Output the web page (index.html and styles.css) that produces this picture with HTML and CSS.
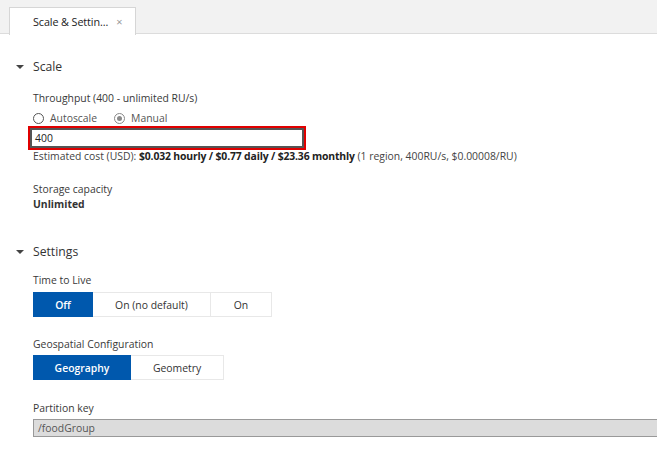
FILE: index.html
```html
<!DOCTYPE html>
<html>
<head>
<meta charset="utf-8">
<link rel="stylesheet" href="styles.css">
</head>
<body>
<div class="tabbar">
  <div class="tab"><span class="tab-title">Scale &amp; Settin...</span><span class="tab-close">×</span></div>
</div>
<div class="content">
  <div class="section-head scale-head"><span class="caret"></span><span class="section-title">Scale</span></div>
  <div class="label throughput">Throughput (400 - unlimited RU/s)</div>
  <div class="radios">
    <span class="radio"></span><span class="radio-label">Autoscale</span>
    <span class="radio checked"></span><span class="radio-label">Manual</span>
  </div>
  <div class="input-wrap"><div class="input">400</div></div>
  <div class="cost">Estimated cost (USD): <b>$0.032 hourly / $0.77 daily / $23.36 monthly</b> (1 region, 400RU/s, $0.00008/RU)</div>
  <div class="label storage">Storage capacity</div>
  <div class="value">Unlimited</div>
  <div class="section-head settings-head"><span class="caret"></span><span class="section-title">Settings</span></div>
  <div class="label ttl-label">Time to Live</div>
  <div class="toggle">
    <span class="opt sel w-off">Off</span><span class="opt w-nodef">On (no default)</span><span class="opt w-on">On</span>
  </div>
  <div class="label geo-label">Geospatial Configuration</div>
  <div class="toggle">
    <span class="opt sel w-geog">Geography</span><span class="opt w-geom">Geometry</span>
  </div>
  <div class="label pk-label">Partition key</div>
  <div class="pk">/foodGroup</div>
</div>
</body>
</html>
```
FILE: styles.css
```css
html, body {
  margin: 0;
  padding: 0;
  background: #fff;
  font-family: "Segoe UI", "Open Sans", "Noto Sans", sans-serif;
  color: #393939;
  overflow: hidden;
}
.tabbar {
  height: 34px;
  background: #f2f2f2;
  border-bottom: 1px solid #dcdcdc;
  box-sizing: border-box;
  padding-left: 9px;
  padding-top: 7px;
  display: flex;
}
.tab {
  width: 127px;
  height: 28px;
  background: #fff;
  border: 1px solid #d6d6d6;
  border-bottom: none;
  box-sizing: border-box;
  display: flex;
  align-items: center;
  padding-left: 23px;
  font-size: 10.8px;
  color: #222;
}
.tab-title { letter-spacing: -0.1px; }
.tab-close {
  margin-left: 8px;
  color: #999;
  font-size: 11px;
}
.content {
  padding-left: 33px;
  font-size: 10.4px;
}
.section-head {
  display: flex;
  align-items: center;
  height: 20px;
  margin-left: -17px;
}
.scale-head { margin-top: 22px; }
.settings-head { margin-top: 29px; }
.caret {
  width: 0;
  height: 0;
  border-left: 4px solid transparent;
  border-right: 4px solid transparent;
  border-top: 4px solid #444;
  margin-right: 9px;
  margin-top: 2px;
}
.section-title {
  font-size: 12.2px;
  color: #333;
}
.label {
  height: 16px;
  line-height: 16px;
}
.throughput { margin-top: 14px; }
.radios {
  display: flex;
  align-items: center;
  height: 16px;
  margin-top: 4px;
}
.radio {
  width: 11px;
  height: 11px;
  border: 1px solid #555;
  border-radius: 50%;
  box-sizing: border-box;
  margin-right: 6px;
  position: relative;
}
.radio.checked {
  border-color: #888;
  margin-left: 17px;
}
.radio.checked::after {
  content: "";
  position: absolute;
  left: 2px; top: 2px;
  width: 5px; height: 5px;
  border-radius: 50%;
  background: #8a8a8a;
}
.radio-label { color: #555; }
.input-wrap {
  margin-left: -5px;
  width: 278px;
  height: 24px;
  border: 2px solid #e00000;
  box-sizing: border-box;
}
.input {
  height: 20px;
  border: 2px solid #555;
  box-sizing: border-box;
  padding-left: 3px;
  line-height: 16px;
  color: #222;
}
.cost {
  height: 14px;
  line-height: 14px;
  margin-top: -1px;
  color: #444;
}
.cost b { color: #222; font-weight: 700; letter-spacing: -0.15px; }
.storage { margin-top: 19px; height: 15px; line-height: 15px; }
.value { font-weight: 700; color: #333; height: 15px; line-height: 15px; }
.ttl-label { margin-top: 11px; }
.toggle {
  display: flex;
}
.ttl-label + .toggle { margin-top: 4px; }
.geo-label + .toggle { margin-top: 3px; }
.opt {
  height: 25px;
  box-sizing: border-box;
  border: 1px solid #e8e8e8;
  display: flex;
  align-items: center;
  justify-content: center;
  background: #fff;
  color: #333;
}
.opt + .opt { border-left: none; }
.opt.sel {
  background: #0058ad;
  border-color: #0058ad;
  color: #fff;
  font-weight: 600;
}
.w-off { width: 60px; }
.w-nodef { width: 118px; }
.w-on { width: 61px; }
.w-geog { width: 98px; }
.w-geom { width: 93px; }
.geo-label { margin-top: 19px; }
.pk-label { margin-top: 20px; }
.pk {
  margin-top: 3px;
  height: 18px;
  background: #dcdcdc;
  border: 1px solid #999;
  border-right: none;
  box-sizing: border-box;
  padding-left: 4px;
  line-height: 16px;
  color: #555;
}
```
